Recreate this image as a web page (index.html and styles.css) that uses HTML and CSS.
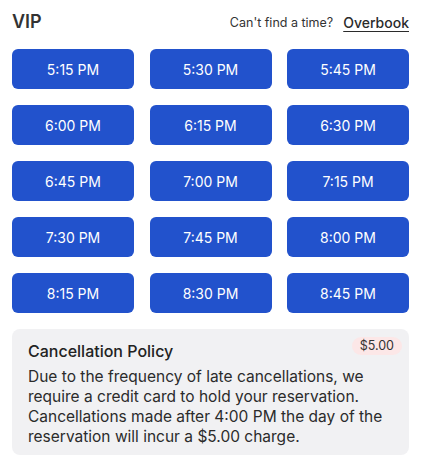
FILE: index.html
```html
<!DOCTYPE html>
<html>
<head>
<meta charset="utf-8">
<link rel="stylesheet" href="styles.css">
</head>
<body>
<div class="panel">
  <div class="header">
    <h2 class="title">VIP</h2>
    <div class="overbook">
      <span class="hint">Can't find a time?</span>
      <a class="link">Overbook</a>
    </div>
  </div>
  <div class="grid">
    <button class="slot">5:15 PM</button>
    <button class="slot">5:30 PM</button>
    <button class="slot">5:45 PM</button>
    <button class="slot">6:00 PM</button>
    <button class="slot">6:15 PM</button>
    <button class="slot">6:30 PM</button>
    <button class="slot">6:45 PM</button>
    <button class="slot">7:00 PM</button>
    <button class="slot">7:15 PM</button>
    <button class="slot">7:30 PM</button>
    <button class="slot">7:45 PM</button>
    <button class="slot">8:00 PM</button>
    <button class="slot">8:15 PM</button>
    <button class="slot">8:30 PM</button>
    <button class="slot">8:45 PM</button>
  </div>
  <div class="policy">
    <div class="policy-head">
      <h3 class="policy-title">Cancellation Policy</h3>
      <span class="badge">$5.00</span>
    </div>
    <p class="policy-text">Due to the frequency of late cancellations, we require a credit card to hold your reservation. Cancellations made after 4:00 PM the day of the reservation will incur a $5.00 charge.</p>
  </div>
</div>
</body>
</html>
```
FILE: styles.css
```css
* { box-sizing: border-box; }
html, body { margin: 0; padding: 0; background: #fff; }
body { font-family: Inter, "Noto Sans", sans-serif; color: #2b2b2b; }
.panel { width: 397px; margin-left: 12px; padding-top: 9px; }
.header { display: flex; justify-content: space-between; align-items: center; height: 24px; }
.title { margin: 0; font-size: 18px; font-weight: 600; color: #333; letter-spacing: 0; }
.overbook { display: flex; align-items: center; gap: 10px; margin-top: 2px; }
.hint { font-size: 12.5px; color: #333; }
.link { font-size: 14px; font-weight: 500; color: #2b2b2b; text-decoration: underline; text-underline-offset: 3px; }
.grid { display: grid; grid-template-columns: repeat(3, 122px); column-gap: 15.5px; row-gap: 16px; margin-top: 16px; }
.slot { height: 40px; border: none; border-radius: 6px; background: #2252cc; color: #fff; font-family: Inter, "Noto Sans", sans-serif; font-size: 14px; font-weight: 400; padding: 0; }
.policy { margin-top: 16px; background: #f1f1f3; border-radius: 8px; padding: 8px 7px 8px 16px; }
.policy-head { display: flex; justify-content: space-between; align-items: flex-start; }
.policy-title { margin: 4px 0 0; font-size: 16px; font-weight: 500; color: #222; line-height: 20px; }
.badge { background: #fce7e7; color: #333; font-size: 12.5px; border-radius: 9px; padding: 1px 8px; line-height: 16px; }
.policy-text { margin: 6px 0 0; font-size: 15.5px; line-height: 20px; color: #2b2b2b; }
```
